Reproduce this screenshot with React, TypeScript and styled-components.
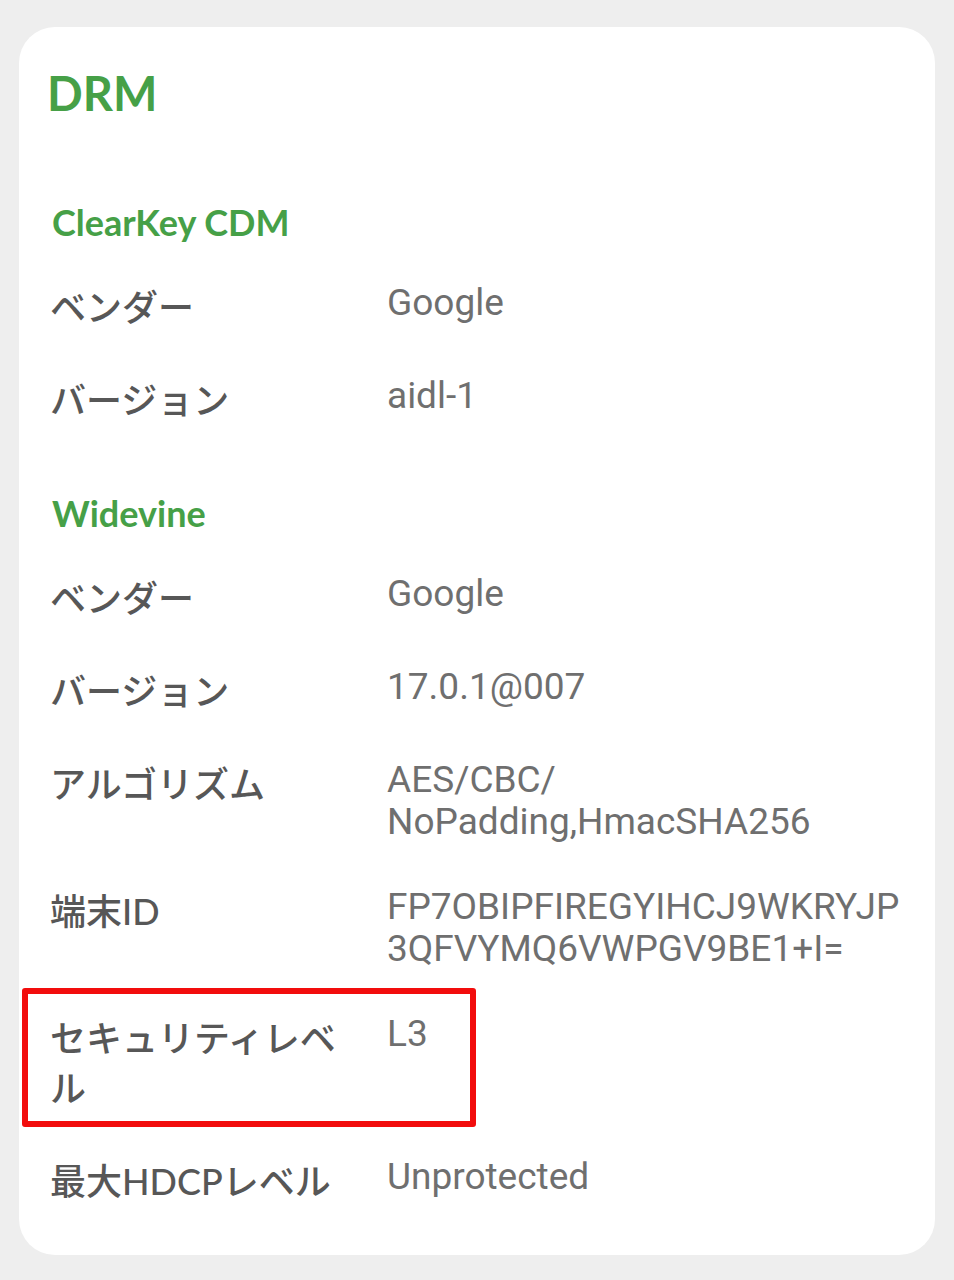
import React from "react";
import styled, { createGlobalStyle } from "styled-components";

const GlobalStyle = createGlobalStyle`
  html, body {
    margin: 0;
    padding: 0;
    background: #eeeeee;
  }
  body {
    font-family: "Lato", "Noto Sans CJK JP", sans-serif;
  }
`;

const Page = styled.div`
  padding: 27px 19px 26px 19px;
  background: #eeeeee;
  min-height: 1280px;
  box-sizing: border-box;
`;

const Card = styled.section`
  background: #ffffff;
  border-radius: 36px;
  padding: 38px 31px 27px 31px;
  display: flex;
  flex-direction: column;
`;

const Title = styled.h1`
  margin: 0 0 0 -3px;
  font-family: "Lato", sans-serif;
  font-weight: 700;
  font-size: 47px;
  line-height: 56px;
  color: #46a047;
`;

const SectionTitle = styled.h2<{ $first?: boolean }>`
  margin: ${(p) => (p.$first ? "79px" : "44px")} 0 17px 2px;
  font-family: "Lato", sans-serif;
  font-weight: 700;
  font-size: 36px;
  line-height: 44px;
  color: #46a047;
`;

const Row = styled.div`
  position: relative;
  display: grid;
  grid-template-columns: 310px minmax(0, 1fr);
  column-gap: 27px;
  align-items: start;
  padding: 21px 0 22px 0;
`;

const Label = styled.div`
  font-family: "Lato", "Noto Sans CJK JP", sans-serif;
  font-weight: 500;
  font-size: 36px;
  line-height: 50px;
  color: #575757;
`;

const Value = styled.div`
  font-family: "Roboto", sans-serif;
  font-weight: 400;
  font-size: 37px;
  line-height: 42px;
  color: #6f6f6f;
  overflow-wrap: break-word;
`;

const Highlight = styled.div`
  position: absolute;
  left: -28px;
  top: -4px;
  width: 454px;
  height: 139px;
  border: 6px solid #f20d0d;
  border-radius: 3px;
  box-sizing: border-box;
  pointer-events: none;
`;

type Item = { label: string; value: string; highlight?: boolean };

const clearKey: Item[] = [
  { label: "ベンダー", value: "Google" },
  { label: "バージョン", value: "aidl-1" },
];

const widevine: Item[] = [
  { label: "ベンダー", value: "Google" },
  { label: "バージョン", value: "17.0.1@007" },
  { label: "アルゴリズム", value: "AES/CBC/\u200BNoPadding,HmacSHA256" },
  { label: "端末ID", value: "FP7OBIPFIREGYIHCJ9WKRYJP3QFVYMQ6VWPGV9BE1+I=" },
  { label: "セキュリティレベル", value: "L3", highlight: true },
  { label: "最大HDCPレベル", value: "Unprotected" },
];

const InfoRow: React.FC<Item> = ({ label, value, highlight }) => (
  <Row>
    <Label>{label}</Label>
    <Value>{value}</Value>
    {highlight && <Highlight />}
  </Row>
);

export default function App() {
  return (
    <>
      <GlobalStyle />
      <Page>
        <Card>
          <Title>DRM</Title>
          <SectionTitle $first>ClearKey CDM</SectionTitle>
          {clearKey.map((it, i) => (
            <InfoRow key={"c" + i} {...it} />
          ))}
          <SectionTitle>Widevine</SectionTitle>
          {widevine.map((it, i) => (
            <InfoRow key={"w" + i} {...it} />
          ))}
        </Card>
      </Page>
    </>
  );
}
